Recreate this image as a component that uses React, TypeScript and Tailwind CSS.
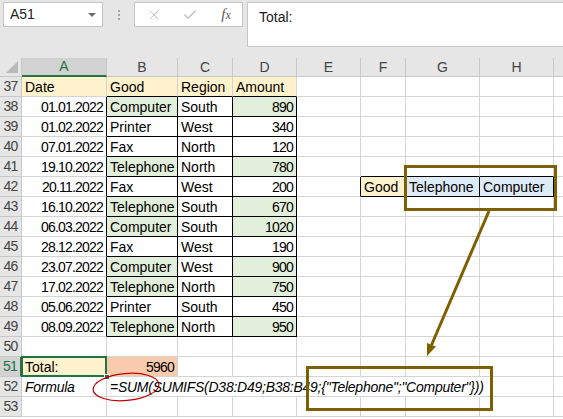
import { X, Check } from 'lucide-react'

type CellDef = {
  t?: string
  bg?: string
  right?: boolean
  italic?: boolean
  num?: boolean
}

const COLS = ['A', 'B', 'C', 'D', 'E', 'F', 'G', 'H', 'I']
const W = ['w-[85px]', 'w-[71px]', 'w-[55px]', 'w-[64px]', 'w-[64px]', 'w-[45px]', 'w-[74px]', 'w-[74px]', 'w-[40px]']

const BEIGE = 'bg-[#fff2cc]'
const GREEN = 'bg-[#e2efda]'
const BLUE = 'bg-[#ddebf7]'
const ORANGE = 'bg-[#f8cbad]'

// date, good, region, amount, highlighted
const sales: [string, string, string, string, boolean][] = [
  ['01.01.2022', 'Computer', 'South', '890', true],
  ['01.02.2022', 'Printer', 'West', '340', false],
  ['07.01.2022', 'Fax', 'North', '120', false],
  ['19.10.2022', 'Telephone', 'North', '780', true],
  ['20.11.2022', 'Fax', 'West', '200', false],
  ['16.10.2022', 'Telephone', 'South', '670', true],
  ['06.03.2022', 'Computer', 'South', '1020', true],
  ['28.12.2022', 'Fax', 'West', '190', false],
  ['23.07.2022', 'Computer', 'West', '900', true],
  ['17.02.2022', 'Telephone', 'North', '750', true],
  ['05.06.2022', 'Printer', 'South', '450', false],
  ['08.09.2022', 'Telephone', 'North', '950', true],
]

const ROWS = Array.from({ length: 17 }, (_, i) => 37 + i)

function boxed(r: number, c: number) {
  return (r >= 38 && r <= 49 && c >= 1 && c <= 3) || (r === 42 && c >= 5 && c <= 7)
}

function getCell(r: number, c: number): CellDef {
  if (r === 37) {
    const head = ['Date', 'Good', 'Region', 'Amount']
    if (c < 4) return { t: head[c], bg: BEIGE }
    return {}
  }
  if (r >= 38 && r <= 49) {
    const [d, g, reg, amt, hl] = sales[r - 38]
    if (c === 0) return { t: d, right: true, num: true }
    if (c === 1) return { t: g, bg: hl ? GREEN : undefined }
    if (c === 2) return { t: reg }
    if (c === 3) return { t: amt, right: true, num: true, bg: hl ? GREEN : undefined }
    if (r === 42) {
      if (c === 5) return { t: 'Good', bg: BEIGE }
      if (c === 6) return { t: 'Telephone', bg: BLUE }
      if (c === 7) return { t: 'Computer', bg: BLUE }
    }
    return {}
  }
  if (r === 51) {
    if (c === 0) return { t: 'Total:', bg: BEIGE }
    if (c === 1) return { t: '5960', bg: ORANGE, right: true, num: true }
  }
  if (r === 52) {
    if (c === 0) return { t: 'Formula', italic: true }
    if (c === 1) return { t: '=SUM(SUMIFS(D38:D49;B38:B49;{"Telephone";"Computer"}))', italic: true }
  }
  return {}
}

function Toolbar() {
  return (
    <div className="h-[58px] bg-[#e6e6e6] flex items-start pt-[2px]">
      <div className="ml-[3px] w-[100px] h-[25px] bg-white border border-[#c6c6c6] flex items-center pl-[6px] text-[14px] text-[#222] relative">
        A51
        <span className="absolute right-[6px] top-[10px] border-x-[4px] border-x-transparent border-t-[4px] border-t-[#6d6d6d]" />
      </div>
      <div className="w-[31px] h-[25px] flex flex-col items-center justify-center gap-[2px]">
        <span className="w-[2px] h-[2px] bg-[#a6a6a6]" />
        <span className="w-[2px] h-[2px] bg-[#a6a6a6]" />
        <span className="w-[2px] h-[2px] bg-[#a6a6a6]" />
      </div>
      <div className="w-[109px] h-[25px] bg-white border border-[#c6c6c6] flex items-center pl-[11px] gap-[20px]">
        <X size={16} strokeWidth={1.5} color="#c4c4c4" />
        <Check size={16} strokeWidth={2.2} color="#c4c4c4" />
        <span className="w-[16px] text-center font-['Liberation_Serif',serif] italic text-[15px] text-[#5a5a5a] leading-none">
          f<span className="text-[12px]">x</span>
        </span>
      </div>
      <div className="ml-[4px] flex-1 h-[45px] bg-white border border-[#c6c6c6] border-r-0 pl-[11px] pt-[4px] text-[14px] text-[#222]">
        Total:
      </div>
    </div>
  )
}

function HeaderRow() {
  return (
    <div className="flex h-[19px] bg-[#e6e6e6] text-[14px] text-[#444]">
      <div className="w-[22px] shrink-0 border-r border-b border-[#c8c8c8] relative">
        <svg width="22" height="19" className="absolute left-0 top-0">
          <polygon points="18,3 18,15 6,15" fill="#b9b9b9" />
        </svg>
      </div>
      {COLS.map((l, c) =>
        c === 0 ? (
          <div key={l} className={`${W[c]} shrink-0 bg-[#d2d2d2] text-[#217346] border-r border-r-[#c8c8c8] border-b-2 border-b-[#217346] flex items-center justify-center`}>
            {l}
          </div>
        ) : (
          <div key={l} className={`${W[c]} shrink-0 border-r border-b border-[#c8c8c8] flex items-center justify-center`}>
            {c < 8 ? l : ''}
          </div>
        )
      )}
    </div>
  )
}

function SheetRow({ r }: { r: number }) {
  const sel = r === 51
  return (
    <div className="flex h-[20px] text-[14px]">
      <div
        className={`w-[22px] shrink-0 border-b border-[#c8c8c8] flex items-center justify-center tracking-[-0.8px] ${
          sel ? 'bg-[#d2d2d2] text-[#217346] border-r-2 border-r-[#217346]' : 'bg-[#e6e6e6] text-[#444] border-r'
        }`}
      >
        {r}
      </div>
      {COLS.map((_, c) => {
        const cell = getCell(r, c)
        const rb = boxed(r, c) || boxed(r, c + 1)
        const bb = boxed(r, c) || boxed(r + 1, c)
        const hideR = r === 52 && c >= 1 && c <= 6
        return (
          <div
            key={c}
            className={`${W[c]} shrink-0 relative border-r border-b ${cell.bg ?? ''} ${
              rb ? 'border-r-black' : hideR ? 'border-r-transparent' : 'border-r-[#d4d4d4]'
            } ${bb ? 'border-b-black' : 'border-b-[#d4d4d4]'}`}
          >
            {cell.t && (
              <div
                className={`absolute top-0 h-[19px] leading-[20px] whitespace-nowrap text-black ${
                  cell.right ? 'right-[3px]' : 'left-[3px]'
                } ${cell.num ? 'tracking-[-0.8px]' : ''} ${cell.italic ? 'italic z-10 tracking-[-0.25px]' : ''}`}
              >
                {cell.t}
              </div>
            )}
            {sel && c === 0 && (
              <>
                <div className="absolute -left-px -top-px -right-px -bottom-px border-2 border-[#217346] z-10" />
                <div className="absolute -right-[4px] -bottom-[4px] w-[6px] h-[6px] bg-[#217346] border border-white z-20" />
              </>
            )}
          </div>
        )
      })}
    </div>
  )
}

export default function App() {
  return (
    <div className="relative w-[563px] h-[419px] overflow-hidden bg-white font-['Liberation_Sans',Arial,sans-serif]">
      <Toolbar />
      <HeaderRow />
      {ROWS.map((r) => (
        <SheetRow key={r} r={r} />
      ))}
      <svg className="absolute left-0 top-0 pointer-events-none z-30" width={563} height={419}>
        <rect x={405.5} y={166.5} width={150} height={43} fill="none" stroke="#7f6000" strokeWidth={3} />
        <line x1={489} y1={211} x2={431.5} y2={345} stroke="#7f6000" strokeWidth={3} />
        <polygon points="436,346.5 427,343 427,356" fill="#7f6000" />
        <rect x={307.5} y={367.5} width={184} height={42} fill="none" stroke="#7f6000" strokeWidth={3} />
        <ellipse cx={126} cy={387} rx={33} ry={13.5} fill="none" stroke="#c00000" strokeWidth={1.2} transform="rotate(-5 126 387)" />
      </svg>
    </div>
  )
}
